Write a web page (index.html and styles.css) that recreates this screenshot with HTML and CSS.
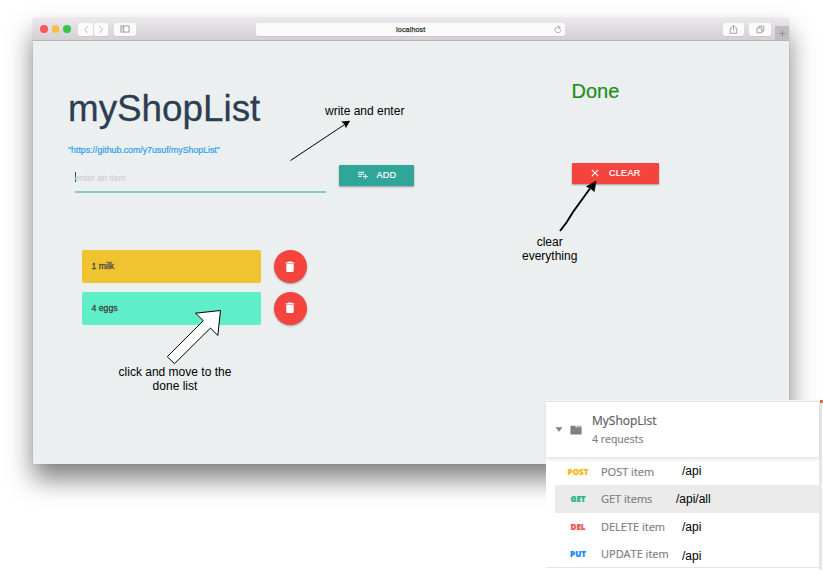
FILE: index.html
```html
<!DOCTYPE html>
<html lang="en">
<head>
<meta charset="utf-8">
<title>myShopList</title>
<link rel="stylesheet" href="styles.css">
</head>
<body>
<div class="window">
  <header class="toolbar">
    <i class="light red"></i><i class="light amber"></i><i class="light green"></i>
    <span class="btn nav back"><svg width="6" height="9" viewBox="0 0 6 9"><path d="M4.7 1.2 1.5 4.5l3.2 3.3" fill="none" stroke="#bbb"/></svg></span>
    <span class="btn nav"><svg width="6" height="9" viewBox="0 0 6 9"><path d="M1.3 1.2l3.2 3.3-3.2 3.3" fill="none" stroke="#bbb"/></svg></span>
    <span class="btn side"><svg width="10" height="8" viewBox="0 0 10 8"><path d="M.9.9h8.2v6.2H.9zM3.7 1v6" fill="none" stroke="#959595" stroke-width=".9"/><path d="M1.6 2.3h1.3M1.6 3.7h1.3M1.6 5.1h1.3" stroke="#999" stroke-width=".6"/></svg></span>
    <span class="btn address"><b>localhost</b><svg class="reload" width="8" height="9" viewBox="0 0 8 9"><path d="M6.3 2.900A2.900 2.900 0 1 0 6.900 5.100M4.300.8l2.200 2-2.400 1.200" fill="none" stroke="#999" stroke-width=".8"/></svg></span>
    <span class="btn share"><svg width="9" height="11" viewBox="0 0 9 11"><path d="M3 4H1.2v5.3h6.6V4H6M4.5 6.6V1.3M2.8 2.9l1.7-1.7 1.7 1.7" fill="none" stroke="#999" stroke-width=".9"/></svg></span>
    <span class="btn tabs"><svg width="9" height="9" viewBox="0 0 9 9"><path d="M1 3h4.8v4.8H1zM3 2.8V1.2h4.8V6H6" fill="none" stroke="#999" stroke-width=".9"/></svg></span>
    <span class="plus"><svg width="7" height="7" viewBox="0 0 7 7"><path d="M3.5.5v6M.5 3.5h6" stroke="#888" stroke-width=".9"/></svg></span>
  </header>
  <main class="page">
    <section class="shop">
      <h1>myShopList</h1>
      <a class="link">"https://github.com/y7usuf/myShopList"</a>
      <div class="form">
        <div class="field"><i class="caret"></i>enter an item</div>
        <div class="button add"><svg width="12" height="9" viewBox="0 0 12 9"><path d="M1 1.3h6.2M1 3.3h6.2M1 5.3h3.9M8.4 3.3v4.6M6 5.6h4.8" stroke="#fff" stroke-width=".95"/></svg>ADD</div>
      </div>
      <div class="item"><span class="card milk">1 milk</span><span class="del"><svg width="10" height="12" viewBox="0 0 10 12"><path d="M.8 1.200h2.200l.6-.6h2.800l.6.6h2.200v1.200H.8zM1.300 3h7.400v6.800q0 1.200-1.200 1.200H2.500q-1.200 0-1.200-1.200z" fill="#fff"/></svg></span></div>
      <div class="item"><span class="card eggs">4 eggs</span><span class="del"><svg width="10" height="12" viewBox="0 0 10 12"><path d="M.8 1.200h2.200l.6-.6h2.800l.6.6h2.200v1.200H.8zM1.300 3h7.400v6.800q0 1.200-1.200 1.200H2.500q-1.200 0-1.200-1.200z" fill="#fff"/></svg></span></div>
    </section>
    <section class="done">
      <h2>Done</h2>
      <div class="button clear"><svg width="8" height="8" viewBox="0 0 8 8"><path d="M.8.8l6.400 6.400M7.200.8.8 7.200" stroke="#fff" stroke-width="1.050"/></svg>CLEAR</div>
    </section>
  </main>
</div>

<svg class="arrows" width="823" height="574" viewBox="0 0 823 574">
  <path d="M290.500 160.500 345 124.300" stroke="#000" fill="none"/>
  <path d="M350.200 120.800 345.800 128.300 344.600 124.600 341.200 121.600z"/>
  <path d="M560 231 566.500 222.500 573 212 590 188.500" stroke="#000" stroke-width="1.900" fill="none"/>
  <path d="M596 181 594.300 191.500 590.500 188.600 586.500 186.500z" stroke="#000" stroke-width=".6"/>
  <path d="M167.300 356.700 203.300 320.700 195.500 313.200 220.500 310.500 217.800 335.500 210.500 328 174.500 363.700z" fill="#fff" stroke="#000"/>
</svg>
<p class="note write">write and enter</p>
<p class="note everything">clear<br>everything</p>
<p class="note move">click and move to the<br>done list</p>

<aside class="panel">
  <div class="folder">
    <svg class="tri" width="8" height="5" viewBox="0 0 8 5"><path d="M.5.3h7L4 4.800z" fill="#808080"/></svg>
    <svg class="dir" width="12" height="10" viewBox="0 0 12 10"><path d="M.4 1.500Q.4.700 1.200.700H5l1.300 1.500h5.300v7.200H.4z" fill="#808080"/><path d="M6.300.7h5.300v1H7z" fill="#999"/></svg>
    <div><div class="name">MyShopList</div><div class="count">4 requests</div></div>
  </div>
  <div class="req first"><b class="post">POST</b><span>POST item</span><em>/api</em></div>
  <div class="req on"><b class="get">GET</b><span>GET items</span><em class="all">/api/all</em></div>
  <div class="req third"><b class="delete">DEL</b><span>DELETE item</span><em>/api</em></div>
  <div class="req last"><b class="put">PUT</b><span>UPDATE item</span><em>/api</em></div>
  <i class="mark"></i>
</aside>
</body>
</html>
```

FILE: styles.css
```css
* { box-sizing: border-box; }
body {
  margin: 0;
  width: 823px;
  height: 574px;
  padding: 18px 33px;
  overflow: hidden;
  position: relative;
  background: #fff;
  font-family: "Liberation Sans", Arial, sans-serif;
}
svg { display: block; flex: none; }
.window {
  width: 756px;
  height: 446px;
  border-radius: 3px 3px 1px 1px;
  background: #ebeff0;
  box-shadow: 0 15px 26px rgba(0, 0, 0, .5), 0 0 1px rgba(0, 0, 0, .25);
}
.toolbar {
  height: 23px;
  display: flex;
  align-items: center;
  padding-left: 7px;
  border-radius: 3px 3px 0 0;
  border-bottom: 1px solid #b5b2b5;
  background: linear-gradient(#ebe8eb, #d4d1d4);
}
.light { width: 7.500px; height: 7.500px; border-radius: 50%; margin-right: 4.200px; }
.red { background: #fc5b57; }
.amber { background: #fdbc40; }
.green { background: #34c84a; }
.btn {
  height: 13px;
  border-radius: 2px;
  background: #fbfbfb;
  box-shadow: 0 .5px .5px rgba(0, 0, 0, .12);
  display: flex;
  align-items: center;
  justify-content: center;
}
.nav { width: 14.500px; }
.back { margin: 0 1px 0 3.200px; }
.side { width: 21.500px; margin-left: 6px; }
.address { width: 309px; margin-left: 120.500px; position: relative; }
.address b { font-size: 7.200px; font-weight: 400; color: #333; -webkit-text-stroke: .25px #333; letter-spacing: .1px; }
.reload { position: absolute; right: 3px; top: 2px; }
.share { width: 21.500px; margin-left: 157.500px; }
.tabs { width: 21.500px; margin-left: 5px; }
.plus {
  width: 14px;
  height: 14px;
  margin-left: auto;
  align-self: flex-end;
  background: #c0bdc0;
  display: flex;
  align-items: center;
  justify-content: center;
}
.page { display: flex; }
.shop { width: 504px; padding: 46px 0 0 35px; }
h1 { margin: 0; font-size: 36.800px; line-height: 44px; font-weight: 400; color: #2c3e50; -webkit-text-stroke: .3px #2c3e50; }
.link { display: block; margin-top: 13px; font-size: 8.780px; line-height: 12px; color: #2b9fe6; -webkit-text-stroke: .2px #2b9fe6; }
.form { display: flex; margin: 8px 0 0 7px; height: 30px; }
.field {
  width: 251px;
  height: 29px;
  padding-top: 8px;
  display: flex;
  border-bottom: 2px solid #80cbc4;
  font-size: 8.750px;
  line-height: 12px;
  color: #cbcfd0;
  -webkit-text-stroke: .15px #cbcfd0;
}
.caret { width: 1px; height: 10px; background: #444; margin-right: -1px; }
.button {
  display: flex;
  align-items: center;
  height: 21.500px;
  border-radius: 1px;
  color: #fff;
  font-size: 9px;
  letter-spacing: .3px;
  -webkit-text-stroke: .2px #fff;
  box-shadow: 0 1px 2px rgba(0, 0, 0, .35);
}
.add { width: 75px; margin-left: 13px; margin-top: .5px; padding-left: 17.500px; background: #2fa699; }
.add svg { margin-right: 8px; }
.item { display: flex; margin: 0 0 8.500px 14px; height: 33px; }
.form + .item { margin-top: 56px; }
.card {
  width: 179px;
  border-radius: 2px;
  padding-left: 9.500px;
  font-size: 8.700px;
  line-height: 33px;
  color: #444;
  -webkit-text-stroke: .3px #444;
}
.milk { background: #f0c431; }
.eggs { background: #5eefc8; }
.del {
  width: 33px;
  height: 33px;
  margin-left: 13px;
  padding-right: 1px;
  border-radius: 50%;
  background: #f3453e;
  box-shadow: 0 1px 2px rgba(0, 0, 0, .35);
  display: flex;
  align-items: center;
  justify-content: center;
}
.done { padding: 38px 0 0 35px; }
h2 { margin: 0; font-size: 20px; line-height: 24px; font-weight: 400; color: #1e8e1e; margin-left: -.5px; -webkit-text-stroke: .2px #1e8e1e; }
.clear { width: 86.500px; margin-top: 59.500px; padding-left: 19px; background: #f3453e; }
.clear svg { margin-right: 10px; }
.arrows { position: absolute; left: 0; top: 0; }
.note { position: absolute; margin: 0; font-size: 12px; line-height: 14px; color: #000; text-align: center; white-space: nowrap; }
.write { left: 325px; top: 104px; }
.everything { left: 522px; top: 235px; }
.move { left: 118.600px; top: 365px; }
.panel {
  position: absolute;
  left: 546px;
  top: 400px;
  width: 276px;
  height: 170px;
  background: #fff;
  border-top: 1px solid #f4f5f5;
  border-right: 3px solid #e6e6e6;
  font-family: "Open Sans", sans-serif;
  color: #808080;
}
.folder {
  height: 57px;
  display: flex;
  padding-left: 9px;
  align-items: center;
  border-top: 1px solid #e4e4e4;
  border-bottom: 1px solid #e8e8e8;
  box-shadow: 0 2px 3px rgba(0, 0, 0, .08);
}
.dir { margin: 0 10px 0 7px; }
.name { font-size: 12px; line-height: 18px; color: #606060; -webkit-text-stroke: .2px #606060; }
.count { font-size: 10.500px; line-height: 18px; -webkit-text-stroke: .15px #808080; }
.req { height: 27.300px; margin-left: 9px; display: flex; align-items: center; font-size: 11px; }
.req b { width: 46px; text-align: center; font-size: 8px; font-weight: 800; -webkit-text-stroke: .2px currentColor; }
.req span { width: 81px; white-space: nowrap; -webkit-text-stroke: .2px #808080; }
.on { background: #ebebeb; }
.req em { font: 12px "Liberation Sans", Arial, sans-serif; color: #000; }
.req .all { margin-left: -6px; }
.first em { padding-bottom: 2px; }
.third em { padding-top: 2px; }
.last em { padding-top: 5px; }
.last { box-shadow: 0 1px #e6e6e6; margin-left: 0; padding-left: 9px; }
.post { color: #fdb515; }
.get { color: #2bb585; }
.delete { color: #ee5252; }
.put { color: #1e88f5; }
.mark { position: absolute; right: -4px; top: -1px; width: 3px; height: 3px; background: #e8694a; }
```
